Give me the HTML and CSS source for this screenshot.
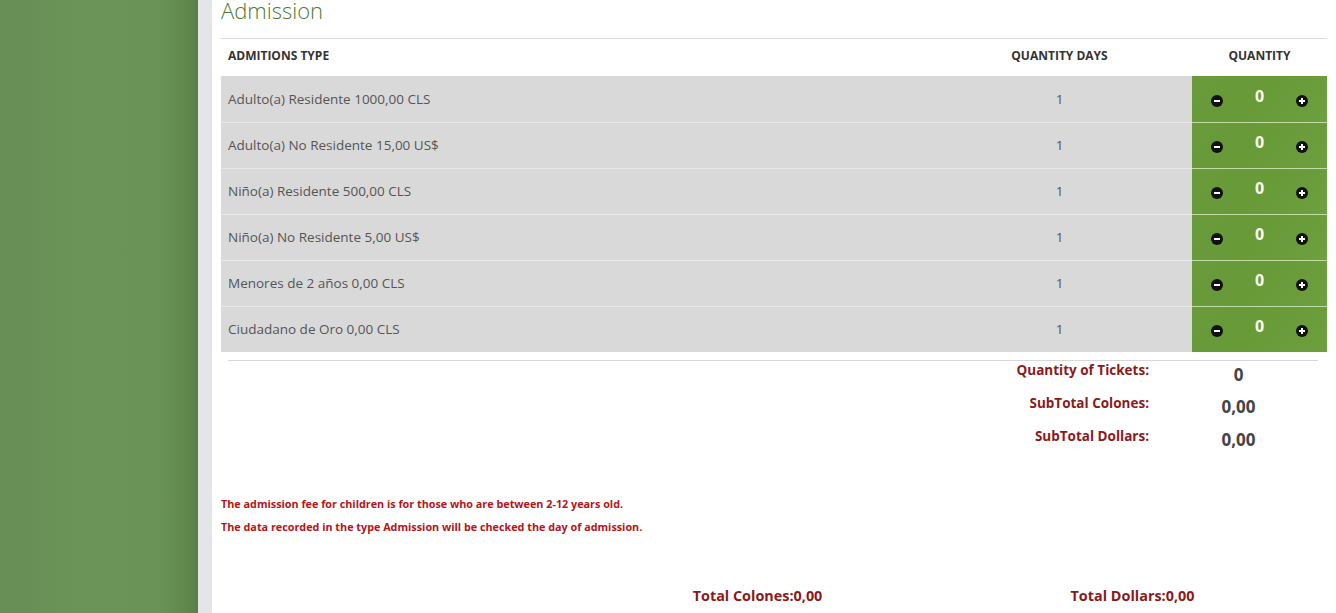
FILE: index.html
```html
<!DOCTYPE html>
<html lang="en">
<head>
<meta charset="utf-8">
<title>Admission</title>
<link rel="stylesheet" href="styles.css">
</head>
<body>
<div class="page">
  <aside class="sidebar"></aside>
  <div class="gutter"></div>
  <main class="content">
    <h2 class="title">Admission</h2>
    <table class="adm">
      <thead>
        <tr>
          <th class="c-type">ADMITIONS TYPE</th>
          <th class="c-days">QUANTITY DAYS</th>
          <th class="c-qty">QUANTITY</th>
        </tr>
      </thead>
      <tbody>
        <tr><td class="c-type">Adulto(a) Residente 1000,00 CLS</td><td class="c-days">1</td><td class="c-qty"><div class="stepper"><span class="btn minus"></span><span class="val">0</span><span class="btn plus"></span></div></td></tr>
        <tr><td class="c-type">Adulto(a) No Residente 15,00 US$</td><td class="c-days">1</td><td class="c-qty"><div class="stepper"><span class="btn minus"></span><span class="val">0</span><span class="btn plus"></span></div></td></tr>
        <tr><td class="c-type">Niño(a) Residente 500,00 CLS</td><td class="c-days">1</td><td class="c-qty"><div class="stepper"><span class="btn minus"></span><span class="val">0</span><span class="btn plus"></span></div></td></tr>
        <tr><td class="c-type">Niño(a) No Residente 5,00 US$</td><td class="c-days">1</td><td class="c-qty"><div class="stepper"><span class="btn minus"></span><span class="val">0</span><span class="btn plus"></span></div></td></tr>
        <tr><td class="c-type">Menores de 2 años 0,00 CLS</td><td class="c-days">1</td><td class="c-qty"><div class="stepper"><span class="btn minus"></span><span class="val">0</span><span class="btn plus"></span></div></td></tr>
        <tr><td class="c-type">Ciudadano de Oro 0,00 CLS</td><td class="c-days">1</td><td class="c-qty"><div class="stepper"><span class="btn minus"></span><span class="val">0</span><span class="btn plus"></span></div></td></tr>
      </tbody>
    </table>
    <div class="summary">
      <div class="s-label">Quantity of Tickets:</div><div class="s-val first">0</div>
      <div class="s-label">SubTotal Colones:</div><div class="s-val">0,00</div>
      <div class="s-label">SubTotal Dollars:</div><div class="s-val">0,00</div>
    </div>
    <div class="notes">
      <p>The admission fee for children is for those who are between 2-12 years old.</p>
      <p>The data recorded in the type Admission will be checked the day of admission.</p>
    </div>
    <div class="totals">
      <div></div>
      <div class="total">Total Colones:0,00</div>
      <div class="total">Total Dollars:0,00</div>
    </div>
  </main>
</div>
</body>
</html>
```

FILE: styles.css
```css
* { box-sizing: border-box; }
html, body { margin: 0; padding: 0; }
body {
  font-family: "Open Sans", "Noto Sans", sans-serif;
  background: #fff;
  color: #555;
  overflow: hidden;
}
.page {
  display: flex;
  height: 613px;
}
.sidebar {
  width: 198px;
  flex: none;
  background: linear-gradient(90deg, #678f55 0%, #6b9459 40%, #6a9358 80%, #5e8549 97%, #557c42 100%);
}
.gutter {
  width: 14px;
  flex: none;
  background: #e4e5e9;
}
.content {
  flex: 1;
  padding: 0 9px;
}
.title {
  margin: 0;
  font-size: 22px;
  font-weight: 300;
  color: #4d7a33;
  line-height: 21px;
  height: 38px;
}
.adm {
  width: 100%;
  border-collapse: collapse;
  border-top: 1px solid #dcdcdc;
}
.adm th {
  height: 37px;
  font-size: 12px;
  font-weight: 700;
  color: #333;
  padding: 0 0 4px 0;
  text-align: left;
}
.adm th.c-type { padding-left: 7px; }
.adm th.c-days, .adm th.c-qty { text-align: center; }
.adm td {
  height: 46px;
  padding: 0;
  font-size: 13.5px;
  color: #555;
  background: #d9d9d9;
  box-shadow: inset 0 1px 0 #e7e7e7;
}
.adm tbody tr:first-child td { box-shadow: none; }
.adm td.c-type { padding-left: 7px; }
.adm td.c-days { text-align: center; width: 265px; }
.adm .c-qty { width: 135px; }
.adm td.c-qty {
  background: linear-gradient(135deg, #6a9a3c 0%, #689a38 50%, #6e9f40 100%);
  box-shadow: inset 0 1px 0 #c4dba8;
}
.adm tbody tr:first-child td.c-qty { box-shadow: none; }
.stepper {
  display: flex;
  align-items: center;
  justify-content: space-between;
  padding: 0 19px;
}
.btn {
  width: 12px;
  height: 12px;
  border-radius: 50%;
  background: #111;
  position: relative;
  margin-top: 5px;
}
.btn::before, .btn::after {
  content: "";
  position: absolute;
  background: #fff;
  left: 3px;
  top: 5px;
  width: 6px;
  height: 2px;
}
.plus::after {
  left: 5px;
  top: 3px;
  width: 2px;
  height: 6px;
}
.minus::after { display: none; }
.val {
  color: #fbfff0;
  font-weight: 700;
  font-size: 16px;
  margin-top: -6px;
}
.summary {
  margin: 8px 9px 0 7px;
  border-top: 1px solid #d8d8d8;
  display: grid;
  grid-template-columns: 1fr 179px;
}
.s-label {
  text-align: right;
  font-size: 13.5px;
  font-weight: 700;
  color: #8b1a1a;
  height: 33px;
  line-height: 18px;
  margin-right: -10px;
}
.s-val {
  text-align: center;
  font-size: 17px;
  font-weight: 700;
  color: #444;
  line-height: 18px;
  padding-top: 4px;
  margin-left: 10px;
  margin-right: -10px;
}
.s-val.first { padding-top: 5px; }
.notes {
  margin-top: 32px;
}
.notes p {
  margin: 0;
  font-size: 10.8px;
  font-weight: 700;
  color: #b3161b;
  line-height: 23px;
}
.totals {
  display: grid;
  grid-template-columns: 349px 375px 375px;
  margin-top: 48px;
}
.total {
  text-align: center;
  font-size: 14.4px;
  font-weight: 700;
  color: #8b1a1a;
  line-height: 20px;
}
```
